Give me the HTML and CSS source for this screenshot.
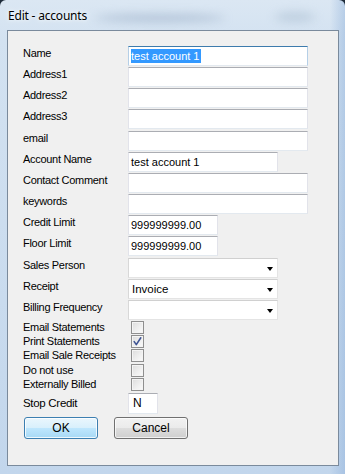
FILE: index.html
```html
<!DOCTYPE html>
<html>
<head>
<meta charset="utf-8">
<title>Edit - accounts</title>
<link rel="stylesheet" href="styles.css">
</head>
<body>
<div class="window">
  <div class="titlebar">
    <span class="glow glow-a"></span>
    <span class="glow glow-b"></span>
    <span class="title">Edit - accounts</span>
  </div>
  <div class="client">
    <div class="form">
      <label class="lbl">Name</label>
      <div class="box w-full focused"><span class="sel">test account 1</span></div>

      <label class="lbl">Address1</label>
      <div class="box w-full"></div>

      <label class="lbl">Address2</label>
      <div class="box w-full"></div>

      <label class="lbl">Address3</label>
      <div class="box w-full"></div>

      <label class="lbl">email</label>
      <div class="box w-full"></div>

      <label class="lbl">Account Name</label>
      <div class="box w-mid">test account 1</div>

      <label class="lbl">Contact Comment</label>
      <div class="box w-full"></div>

      <label class="lbl">keywords</label>
      <div class="box w-full"></div>

      <label class="lbl">Credit Limit</label>
      <div class="box w-num">999999999.00</div>

      <label class="lbl">Floor Limit</label>
      <div class="box w-num">999999999.00</div>

      <label class="lbl">Sales Person</label>
      <div class="combo w-mid"><span class="arrow"></span></div>

      <label class="lbl">Receipt</label>
      <div class="combo w-mid"><span class="val">Invoice</span><span class="arrow"></span></div>

      <label class="lbl">Billing Frequency</label>
      <div class="combo w-mid"><span class="arrow"></span></div>

      <label class="lbl chk-lbl">Email Statements</label>
      <div class="chk-cell"><span class="chk"></span></div>

      <label class="lbl chk-lbl">Print Statements</label>
      <div class="chk-cell"><span class="chk checked"><svg viewBox="0 0 11 11" width="11" height="11"><path d="M2.2 5.6 L4.3 8.6 L8.8 1.8" fill="none" stroke="#3f5493" stroke-width="1.6" stroke-linecap="round" stroke-linejoin="round"/></svg></span></div>

      <label class="lbl chk-lbl">Email Sale Receipts</label>
      <div class="chk-cell"><span class="chk"></span></div>

      <label class="lbl chk-lbl">Do not use</label>
      <div class="chk-cell"><span class="chk"></span></div>

      <label class="lbl chk-lbl">Externally Billed</label>
      <div class="chk-cell"><span class="chk"></span></div>

      <label class="lbl stop-lbl">Stop Credit</label>
      <div class="box w-tiny">N</div>
    </div>
    <div class="buttons">
      <button class="btn btn-default">OK</button>
      <button class="btn">Cancel</button>
    </div>
  </div>
</div>
</body>
</html>
```

FILE: styles.css
```css
html, body {
  margin: 0;
  padding: 0;
  background: #1e2b3a;
}

.window {
  width: 345px;
  height: 474px;
  display: flex;
  flex-direction: column;
  border-radius: 6px 6px 0 0;
  background: linear-gradient(to right, rgba(255,255,255,0) 0px, rgba(255,255,255,0) 330px, rgba(120,160,210,0.35) 345px),
              linear-gradient(to bottom, #dbe7f3 0px, #d3e2f1 40px, #c9dbee 300px, #c2d6ec 474px);
  overflow: hidden;
  box-sizing: border-box;
  font-family: "Liberation Sans", Arial, sans-serif;
}

.titlebar {
  height: 30px;
  flex: 0 0 30px;
  position: relative;
  overflow: hidden;
}

.glow {
  position: absolute;
  border-radius: 50%;
  filter: blur(5px);
}

.glow-a {
  left: 95px;
  top: 14px;
  width: 130px;
  height: 8px;
  background: rgba(150, 170, 195, 0.55);
}

.glow-b {
  left: 275px;
  top: 12px;
  width: 40px;
  height: 10px;
  background: rgba(165, 185, 205, 0.5);
}

.title {
  position: absolute;
  left: 8px;
  top: 7px;
  font-family: "Noto Sans", "Open Sans", sans-serif;
  font-size: 12px;
  letter-spacing: -0.2px;
  color: #000;
  text-shadow: 0 0 6px #f4f8fc, 0 0 3px #f4f8fc;
}

.client {
  flex: 1;
  margin: 0 6px 8px 7px;
  border: 1px solid #7a8a9c;
  background: #f0f0f0;
  padding: 15px 0 0 15px;
  box-sizing: border-box;
  display: flex;
  flex-direction: column;
}

.form {
  display: grid;
  grid-template-columns: 105px auto;
  row-gap: 1.17px;
  align-items: start;
}

.lbl {
  font-size: 11px;
  line-height: 14px;
  color: #000;
  padding-top: 0;
  letter-spacing: -0.3px;
  white-space: nowrap;
}

.box, .combo {
  height: 20px;
  box-sizing: border-box;
  background: #fff;
  border: 1px solid #e2e3ea;
  border-top-color: #abadb3;
  border-bottom-color: #e3e9ef;
  font-size: 11px;
  line-height: 18px;
  padding-left: 2px;
  color: #000;
  white-space: nowrap;
  overflow: hidden;
}

.w-full { width: 180px; }
.w-mid { width: 150px; }
.w-num { width: 90px; }
.w-tiny { width: 30px; height: 21px; line-height: 19px; padding-left: 4px; font-size: 12px; }

.focused {
  border-color: #c5daed;
  border-top-color: #3d7bad;
  border-left-color: #b5cfe7;
  border-right-color: #b5cfe7;
  border-bottom-color: #e3e9ef;
}

.sel {
  background: #3399ff;
  color: #fff;
  display: inline-block;
  line-height: 14px;
  padding: 0 1px 0 0;
  margin-top: 2px;
  vertical-align: top;
}

.combo {
  position: relative;
  border: 1px solid #e4e4e4;
  border-top-color: #d0d0d0;
  border-left-color: #d8d8d8;
  padding-left: 3px;
  line-height: 19px;
  font-size: 12px;
}

.val {
  font-size: 11.5px;
}

.arrow {
  position: absolute;
  right: 4px;
  top: 8px;
  width: 0;
  height: 0;
  border-left: 3.5px solid transparent;
  border-right: 3.5px solid transparent;
  border-top: 4px solid #000;
}

.chk-lbl {
  padding-top: 0;
  line-height: 13px;
  height: 13px;
  font-size: 11px;
  letter-spacing: -0.3px;
}

.chk-cell {
  height: 13px;
  padding-left: 3px;
}

.chk {
  display: block;
  width: 13px;
  height: 13px;
  box-sizing: border-box;
  border: 1px solid #8f8f8f;
  background: linear-gradient(135deg, #dcdcdc 0%, #f0f0f0 60%, #fbfbfb 100%);
  box-shadow: inset 0 0 0 1px #f4f4f4;
  position: relative;
}

.chk svg {
  position: absolute;
  left: 0;
  top: 0;
}

.stop-lbl {
  padding-top: 4px;
  font-size: 11.5px;
  letter-spacing: -0.3px;
}

.form .w-tiny {
  margin-top: 1px;
}

.buttons {
  display: flex;
  gap: 16px;
  margin-top: 3px;
  padding-left: 1px;
}

.btn {
  width: 74px;
  height: 22px;
  box-sizing: border-box;
  border: 1px solid #707070;
  border-radius: 3px;
  background: linear-gradient(to bottom, #f2f2f2 0%, #ebebeb 48%, #dddddd 52%, #cfcfcf 100%);
  box-shadow: inset 0 0 0 1px rgba(255, 255, 255, 0.7);
  font-family: "Liberation Sans", Arial, sans-serif;
  font-size: 12px;
  color: #000;
  padding: 0;
  margin: 0;
}

.btn-default {
  border-color: #3c7fb1;
  background: linear-gradient(to bottom, #eaf6fd 0%, #d9f0fc 48%, #bee6fd 52%, #a7d9f5 100%);
  box-shadow: inset 0 0 0 1px rgba(255, 255, 255, 0.8);
}
```
